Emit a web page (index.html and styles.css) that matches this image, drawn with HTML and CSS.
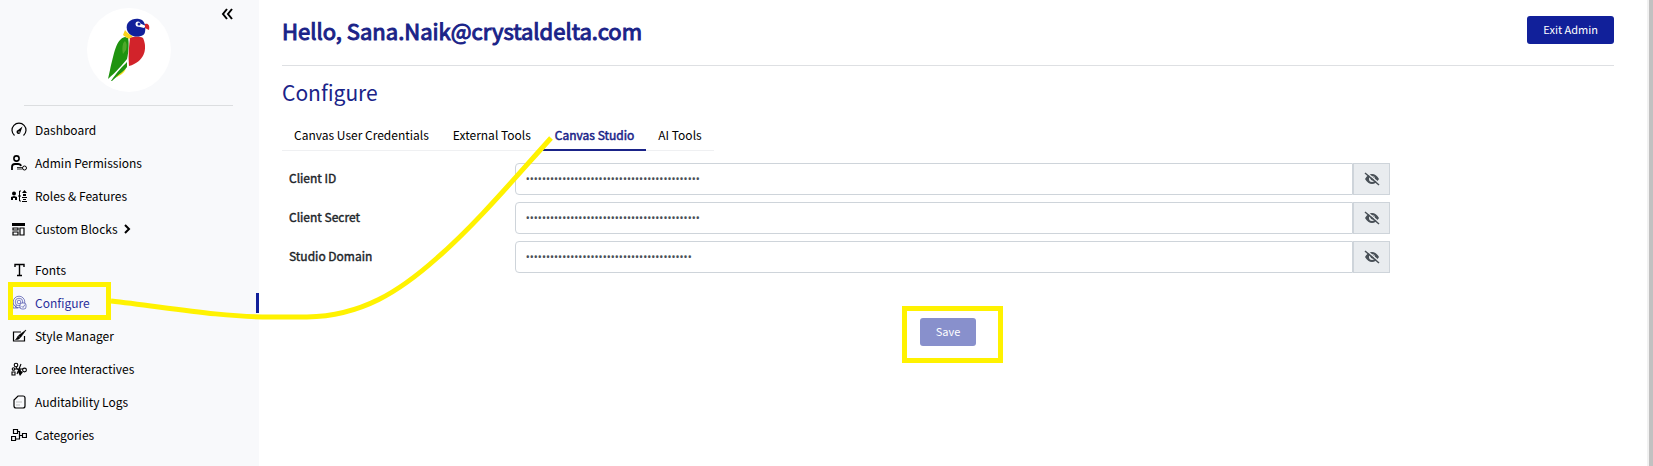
FILE: index.html
```html
<!DOCTYPE html>
<html lang="en">
<head>
    <meta charset="UTF-8">
    <meta name="viewport" content="width=device-width, initial-scale=1.0">
    <title>Configure</title>
    <link rel="stylesheet" href="styles.css">
</head>
<body>
    <aside class="sidebar">
        <div class="sidebar-top">
            <div class="logo">
                <svg width="84" height="84" viewBox="0 0 84 84">
                    <path d="M38 29 C29 31 27 46 23 62 L21 71 C29 64 36 56 40 51 C42 43 42 33 41 30 Z" fill="#1f930f"/>
                    <path d="M38 33 C35 35 35 42 36 46 L39 42 C40 38 40 35 38 33 Z" fill="#4fa82b"/>
                    <path d="M24 73 C30 64 35 59 40 54 L40 59 C36 65 30 68 25 73 Z" fill="#1f930f"/>
                    <path d="M29 69 C33 66 36 63 39 61 L37 64 C34 67 32 68 29 69 Z" fill="#f5dd1c"/>
                    <path d="M43 30 C47 28 53 28 56 30 C61 41 57 54 42 58 C41 48 42 38 43 30 Z" fill="#d2232a"/>
                    <path d="M38 22 C40 25 43 27 46 28 L42 31 C39 29 37 28 36 27 Z" fill="#fbd31c"/>
                    <path d="M40 22 C38 14 45 10 52 11 C58 12 59 18 58 24 C57 29 50 29 46 28 C43 27 41 25 40 22 Z" fill="#11209a"/>
                    <path d="M50 14 L59 18 L57 20 L49 18 Z" fill="#fff"/>
                    <circle cx="51" cy="16" r="2.500" fill="#fff"/>
                    <circle cx="52" cy="16" r="1.500" fill="#11209a"/>
                    <path d="M58 16 C61 15 63 17 62 22 L58 20 Z" fill="#d2232a"/>
                </svg>
            </div>
            <button class="collapse" aria-label="Collapse menu">
                <svg width="12" height="12" viewBox="0 0 12 12"><path d="M6 1 L2 6 L6 11 M11 1 L7 6 L11 11" fill="none" stroke="currentColor" stroke-width="2"/></svg>
            </button>
        </div>
        <nav class="menu">
            <a class="menu-item" href="#">
                <svg class="icon" viewBox="0 0 16 16"><path d="M3.500 13.500 A7 7 0 1 1 12.500 13.500" fill="none" stroke="currentColor" stroke-width="1.200"/><path d="M11.500 4.500 L7 8 A2 2 0 1 0 9.500 10 Z" fill="currentColor"/><circle cx="8" cy="10" r="0.700" fill="#fff"/></svg>
                Dashboard
            </a>
            <a class="menu-item" href="#">
                <svg class="icon" viewBox="0 0 16 16"><circle cx="5.500" cy="3.500" r="2.600" fill="none" stroke="currentColor" stroke-width="1.600"/><path d="M1 15 V12 Q1 9 4 9 H7 Q9.500 9 10 11" fill="none" stroke="currentColor" stroke-width="1.800"/><circle cx="13.500" cy="13" r="2" fill="none" stroke="currentColor"/><path d="M6 12.500 H11.500 M6 14 H11.500" stroke="currentColor" stroke-width="0.800"/></svg>
                Admin Permissions
            </a>
            <a class="menu-item" href="#">
                <svg class="icon" viewBox="0 0 16 16"><circle cx="3" cy="5.500" r="2" fill="currentColor"/><path d="M0 12 V9 L3 8 L6 9 V12 H4 V10 H2 V12 Z" fill="currentColor"/><path d="M10 3 H8.500 V13 H10 M7 8 H10" fill="none" stroke="currentColor"/><path d="M11 5 L13.500 2 L16 5 Z M12 6 H15 V8 H12 Z M11 9 H16 V10 H11 Z M12 11 H15 V12 H12 Z M11 13 H16 V14 H11 Z" fill="currentColor"/></svg>
                Roles &amp; Features
            </a>
            <a class="menu-item" href="#">
                <svg class="icon" viewBox="0 0 16 16"><path d="M1 2 H14 V5 H1 Z" fill="currentColor"/><path d="M2 7 H7 V9 H2 Z M2 11 H7 V14 H2 Z M9 7 H13 V14 H9 Z" fill="none" stroke="currentColor" stroke-width="1.200"/></svg>
                Custom Blocks
                <svg class="chevron" viewBox="0 0 8 10"><path d="M2 1 L6 5 L2 9" fill="none" stroke="currentColor" stroke-width="2"/></svg>
            </a>
            <a class="menu-item menu-item-spaced" href="#">
                <svg class="icon" viewBox="0 0 16 16"><path d="M4 5 V2.500 H13 V5 M8.500 2.500 V13.500 M6 13.500 H11" fill="none" stroke="currentColor" stroke-width="1.400"/></svg>
                Fonts
            </a>
            <a class="menu-item menu-item-active" href="#">
                <svg class="icon" viewBox="0 0 16 16"><g fill="none" stroke="currentColor" stroke-width="0.600"><circle cx="8" cy="7" r="5.800"/><circle cx="8" cy="7" r="3.800"/><circle cx="8" cy="7" r="1.800"/><path d="M2 9 V13 H7 M5 10 V13"/></g><rect x="9" y="8" width="6" height="6" rx="2" fill="#f8f9fb" stroke="currentColor" stroke-width="0.600"/><path d="M10.500 11 L12 12.500 L14 9.500" fill="none" stroke="currentColor" stroke-width="0.600"/></svg>
                Configure
            </a>
            <a class="menu-item" href="#">
                <svg class="icon" viewBox="0 0 16 16"><path d="M10 4 H2.500 V13 H13.500 V8" fill="none" stroke="currentColor" stroke-width="1.200"/><path d="M15 2 L7.500 7.500 L9.500 9.500 Z M7 8 L9 10 Q7 12 4.500 11.500 Q6 10.500 7 8 Z" fill="currentColor" stroke="currentColor" stroke-width="0.600"/></svg>
                Style Manager
            </a>
            <a class="menu-item" href="#">
                <svg class="icon" viewBox="0 0 16 16"><g fill="none" stroke="currentColor" stroke-width="1.100"><circle cx="5" cy="4" r="1.800"/><circle cx="2.500" cy="8" r="1.300"/><path d="M1 11 H4 V14 H1 Z M10 3 L6 13 M5 6 L10 13 M4 8 H12"/><circle cx="13.500" cy="9" r="1.900"/></g><path d="M9 7 L10 10 L12 11 L9 15 L7 11 Z" fill="currentColor"/></svg>
                Loree Interactives
            </a>
            <a class="menu-item" href="#">
                <svg class="icon" viewBox="0 0 16 16"><path d="M7 2 H12 Q14 2 14 4 V12 Q14 14 12 14 H5 Q3 14 3 12 V6 Z" fill="none" stroke="currentColor" stroke-width="1.200"/><path d="M5 8 H11 M5 11 H9" stroke="#999" stroke-width="0.600"/></svg>
                Auditability Logs
            </a>
            <a class="menu-item" href="#">
                <svg class="icon" viewBox="0 0 16 16"><path d="M2.500 2.500 H6.500 V6.500 H2.500 Z M0.600 9.500 H4.500 V13.500 H0.600 Z M11.500 6.500 H15.400 V10.500 H11.500 Z M6.500 4.500 H8.500 V12 H4.500 M8.500 8.500 H11.500" fill="none" stroke="currentColor" stroke-width="1.200"/></svg>
                Categories
            </a>
        </nav>
    </aside>

    <main class="content">
        <header class="header">
            <h1 class="greeting">Hello, Sana.Naik@crystaldelta.com</h1>
            <button class="btn">Exit Admin</button>
        </header>

        <h2 class="title">Configure</h2>
        <nav class="tabs">
            <a class="tab" href="#">Canvas User Credentials</a>
            <a class="tab" href="#">External Tools</a>
            <a class="tab tab-active" href="#">Canvas Studio</a>
            <a class="tab" href="#">AI Tools</a>
        </nav>

        <form class="form">
            <div class="form-row">
                <label class="form-label" for="clientId">Client ID</label>
                <div class="input-group">
                    <input class="input" type="password" id="clientId" value="1234567890123456789012345678901234567890123">
                    <button class="toggle" type="button" aria-label="Show client ID"><svg width="16" height="14" viewBox="0 0 16 14"><use href="#eyeOff"/></svg></button>
                </div>
            </div>
            <div class="form-row">
                <label class="form-label" for="clientSecret">Client Secret</label>
                <div class="input-group">
                    <input class="input" type="password" id="clientSecret" value="1234567890123456789012345678901234567890123">
                    <button class="toggle" type="button" aria-label="Show client secret"><svg width="16" height="14" viewBox="0 0 16 14"><use href="#eyeOff"/></svg></button>
                </div>
            </div>
            <div class="form-row">
                <label class="form-label" for="studioDomain">Studio Domain</label>
                <div class="input-group">
                    <input class="input" type="password" id="studioDomain" value="12345678901234567890123456789012345678901">
                    <button class="toggle" type="button" aria-label="Show studio domain"><svg width="16" height="14" viewBox="0 0 16 14"><use href="#eyeOff"/></svg></button>
                </div>
            </div>
            <div class="form-actions">
                <button class="btn btn-save" type="submit" disabled>Save</button>
            </div>
        </form>
    </main>
    <div class="scrollbar"></div>

    <!-- marker notes on top of the page -->
    <svg class="notes" width="1010" height="370" viewBox="0 0 1010 370">
        <rect x="10.500" y="284.500" width="98" height="33"/>
        <path d="M111 301 C165 307 220 317 270 317 H307 C362 316 400 291 437 258 C475 225 513 180 551 138"/>
        <rect x="904.500" y="308.500" width="96" height="52"/>
    </svg>

    <svg width="0" height="0" class="symbols">
        <symbol id="eyeOff" viewBox="0 0 16 14">
            <path d="M1 7 Q4 2 8 2 Q12 2 15 7 Q12 12 8 12 Q4 12 1 7 Z M8 4 A3 3 0 1 0 8 10 A3 3 0 1 0 8 4 Z" fill="currentColor" fill-rule="evenodd"/>
            <circle cx="8.500" cy="6.500" r="2" fill="currentColor"/>
            <path d="M2 0 L16 12" stroke="#e9ecef" stroke-width="1.500"/>
            <path d="M1 1 L15 13" stroke="currentColor" stroke-width="1.500"/>
        </symbol>
    </svg>
</body>
</html>
```
FILE: styles.css
```css
* {
    box-sizing: border-box;
}

body {
    margin: 0;
    min-height: 100vh;
    display: flex;
    position: relative;
    background: #fff;
    color: #000;
    font-family: "Noto Sans CJK SC", "Noto Sans", sans-serif;
    font-size: 12px;
    line-height: 20px;
}

a {
    color: inherit;
    text-decoration: none;
}

button {
    font-family: inherit;
    cursor: pointer;
}

.sidebar {
    width: 259px;
    flex-shrink: 0;
    background: #f8f9fb;
}

.sidebar-top {
    position: relative;
    display: flex;
    justify-content: center;
    margin: 0 26px 0 24px;
    padding: 8px 0 13px;
    border-bottom: 1px solid #dcdee0;
}

.logo {
    width: 84px;
    height: 84px;
    border-radius: 50%;
    background: #fff;
    overflow: hidden;
}

.collapse {
    position: absolute;
    top: 8px;
    right: 0;
    padding: 0;
    border: 0;
    background: none;
    color: #000;
}

.collapse svg {
    display: block;
}

.menu {
    padding-top: 7px;
}

.menu-item {
    display: flex;
    align-items: center;
    height: 33px;
    padding-left: 11px;
}

.menu-item-spaced {
    margin-top: 8px;
}

.menu-item-active {
    color: #2a2f9c;
    background: linear-gradient(#11209a, #11209a) right center / 3px 20px no-repeat;
}

.icon {
    width: 16px;
    height: 16px;
    margin-right: 8px;
}

.chevron {
    width: 8px;
    height: 10px;
    margin-left: 5px;
}

.content {
    flex: 1;
    padding: 0 33px 0 23px;
}

.header {
    display: flex;
    justify-content: space-between;
    align-items: flex-start;
    padding: 16px 0 21px;
    border-bottom: 1px solid #dee0e3;
}

.greeting {
    margin: 0;
    color: #1a2388;
    font-size: 22px;
    font-weight: 400;
    line-height: 28px;
    -webkit-text-stroke: 1px;
}

.btn {
    height: 28px;
    padding: 0 16px 2px;
    border: 0;
    border-radius: 3px;
    background: #11209a;
    color: #fff;
    font-size: 11px;
    line-height: 20px;
}

.title {
    margin: 12px 0 11px;
    color: #1a2388;
    font-size: 21px;
    font-weight: 400;
    line-height: 28px;
}

.tabs {
    display: inline-flex;
    border-bottom: 1px solid #eff0f2;
}

.tab {
    padding: 8px 12px 4px;
}

.tab-active {
    margin-bottom: -1px;
    border-bottom: 2px solid #1a2388;
    color: #1a2388;
    -webkit-text-stroke: 0.5px;
}

.form {
    padding-top: 12px;
}

.form-row {
    display: flex;
    width: 83.2%;
    margin-bottom: 7px;
}

.form-label {
    width: 21%;
    padding: 5px 7px;
    color: #212529;
    -webkit-text-stroke: 0.4px;
}

.input-group {
    display: flex;
    flex: 1;
}

.input {
    flex: 1;
    height: 32px;
    padding: 0 10px;
    border: 1px solid #ced4da;
    border-radius: 4px 0 0 4px;
    color: #495057;
    font-family: Roboto, sans-serif;
    font-size: 12px;
}

.toggle {
    display: flex;
    align-items: center;
    justify-content: center;
    width: 37px;
    padding: 0;
    border: 1px solid #ced4da;
    background: #e9ecef;
    color: #495057;
}

.form-actions {
    padding-top: 38px;
    text-align: center;
}

.btn-save {
    background: #8890cc;
    cursor: default;
}

.scrollbar {
    width: 6px;
    flex-shrink: 0;
    background: #c1c1c1;
    border-left: 2px solid #f1f1f1;
}

.notes {
    position: absolute;
    top: 0;
    left: 0;
    fill: none;
    stroke: #fff200;
    stroke-width: 5;
    pointer-events: none;
}

.symbols {
    position: absolute;
}
```
